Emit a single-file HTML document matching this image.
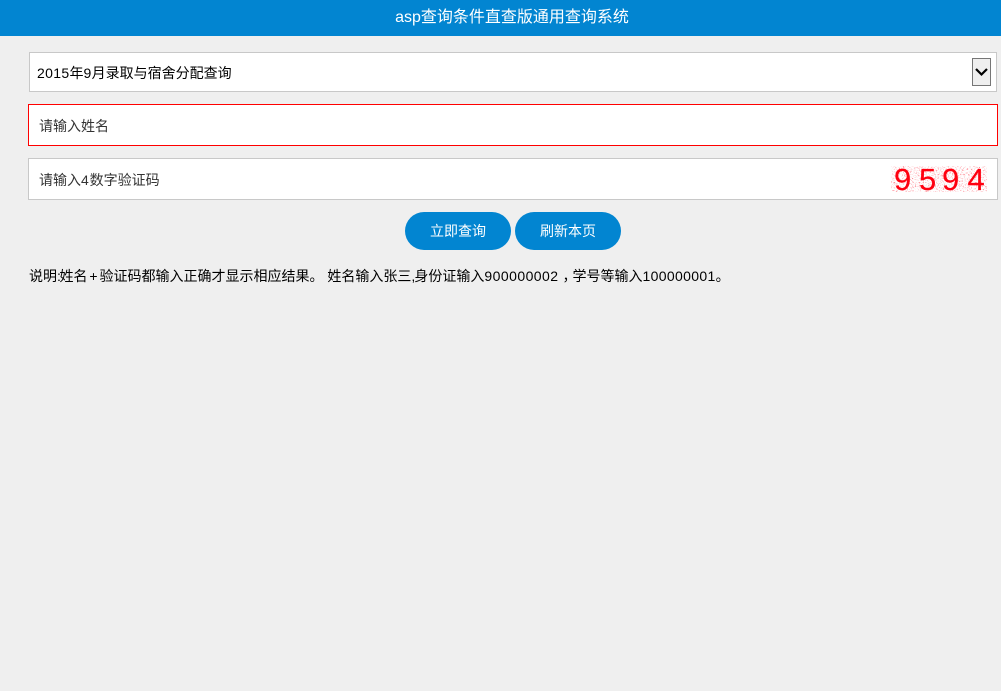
<!DOCTYPE html>
<html lang="zh-CN">
<head>
<meta charset="utf-8">
<title>asp查询条件直查版通用查询系统</title>
<style>
html,body{margin:0;padding:0;width:1001px;height:691px;overflow:hidden;background:#efefef;}
body{position:relative;font-family:"Liberation Sans","Noto Sans CJK SC",sans-serif;font-size:14px;color:#000;}
div{position:absolute;box-sizing:border-box;white-space:nowrap;}
.hd{left:0;top:0;width:1001px;height:36px;background:#0285d1;color:#fff;font-size:16px;line-height:36px;text-align:center;padding-left:23px;}
.box{background:#fff;border:1px solid #c8c8c8;}
.btn{top:212px;width:106px;height:38px;border-radius:19px;background:#0285d1;color:#fff;line-height:38px;text-align:center;}
.ph{color:#333;}
.n{letter-spacing:.34px;}
.i{display:inline-block;}
</style>
</head>
<body>
<div class="hd">asp查询条件直查版通用查询系统</div>

<div class="box" style="left:29px;top:52px;width:968px;height:40px;padding-left:7px;line-height:40px;"><span class="n">2015</span>年<span class="n">9</span>月录取与宿舍分配查询</div>
<div style="left:972px;top:58px;width:19px;height:28px;background:#efefef;border:1px solid #767676;">
<svg width="17" height="26" style="position:absolute;left:0;top:0"><path d="M3 10L8.5 15.5L14 10" fill="none" stroke="#000" stroke-width="2.2"/></svg>
</div>

<div class="box ph" style="left:28px;top:104px;width:970px;height:42px;border-color:#f00;padding-left:10px;line-height:42px;">请输入姓名</div>
<div class="box ph" style="left:28px;top:158px;width:970px;height:42px;padding-left:10px;line-height:42px;">请输入<span style="letter-spacing:.8px">4</span>数字验证码</div>

<svg style="position:absolute;left:890px;top:165px" width="98" height="28">
<defs>
<filter id="noise" x="0" y="0" width="100%" height="100%" color-interpolation-filters="sRGB">
<feTurbulence type="fractalNoise" baseFrequency="0.75" numOctaves="2" seed="7"/>
<feColorMatrix type="matrix" values="0 0 0 0 1  0 0 0 0 0.4  0 0 0 0 0.45  3.6 0 0 0 -1.95"/>
</filter>
</defs>
<rect x="1" y="1" width="96" height="26" filter="url(#noise)"/>
<g font-family="Liberation Sans, sans-serif" font-size="31" fill="#ff0010" stroke="#ff0010" stroke-width=".2">
<text x="4" y="25">9</text>
<text x="29" y="25">5</text>
<text x="52" y="25">9</text>
<text x="77.5" y="25">4</text>
</g>
</svg>

<div class="btn" style="left:405px;">立即查询</div>
<div class="btn" style="left:515px;">刷新本页</div>

<div style="left:29px;top:266px;line-height:21px;">说明<span class="i" style="width:2.5px">:</span>姓名<span class="i" style="width:12px;text-align:center">+</span>验证码都输入正确才显示相应结果。 姓名输入张三<span class="i" style="width:3px">,</span>身份证输入<span style="letter-spacing:.45px">900000002</span><span style="position:relative;left:4px">，</span>学号等输入<span class="n">100000001</span>。</div>
</body>
</html>
